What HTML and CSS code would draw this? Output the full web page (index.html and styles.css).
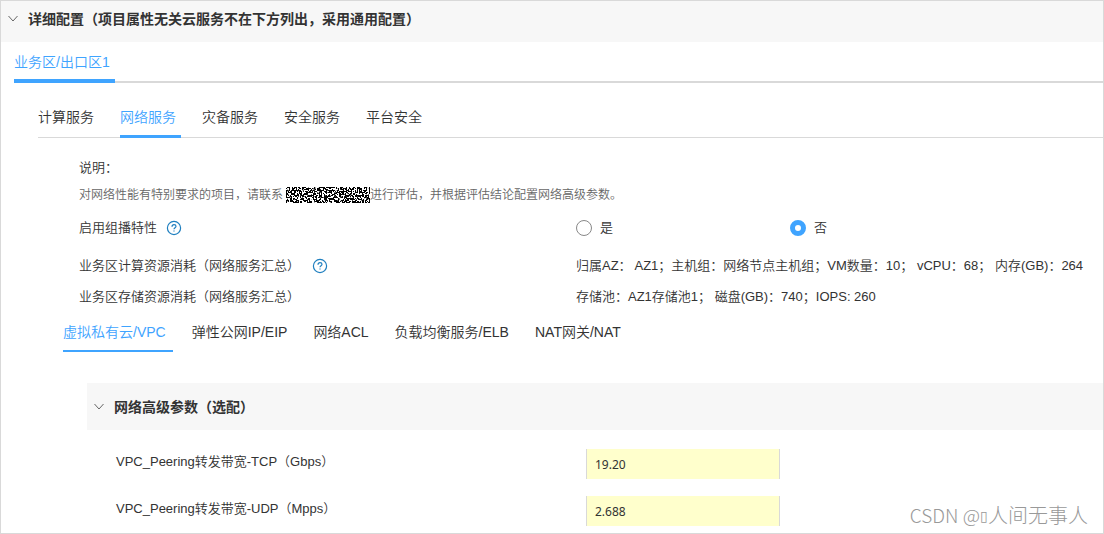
FILE: index.html
```html
<!DOCTYPE html>
<html lang="zh-CN">
<head>
<meta charset="utf-8">
<meta name="viewport" content="width=device-width, initial-scale=1">
<title>详细配置</title>
<link rel="stylesheet" href="styles.css">
</head>
<body>
<main class="page">
  <h1 class="section-head">
    <svg class="chevron" viewBox="0 0 10 10" aria-hidden="true"><path d="M0.5 2 L5 7 L9.5 2"/></svg>
    详细配置（项目属性无关云服务不在下方列出，采用通用配置）
  </h1>

  <nav class="tabs zone-tabs" aria-label="区域">
    <button class="tab active" type="button">业务区/出口区1</button>
  </nav>

  <nav class="tabs service-tabs" aria-label="服务">
    <button class="tab" type="button">计算服务</button>
    <button class="tab active" type="button">网络服务</button>
    <button class="tab" type="button">灾备服务</button>
    <button class="tab" type="button">安全服务</button>
    <button class="tab" type="button">平台安全</button>
  </nav>

  <section class="summary">
    <p class="note-title">说明：</p>
    <p class="note">对网络性能有特别要求的项目，请联系<svg class="redacted" aria-hidden="true"><filter id="grain" x="0" y="0" width="1" height="1" color-interpolation-filters="sRGB"><feTurbulence type="fractalNoise" baseFrequency="0.6" numOctaves="1" seed="4"/><feColorMatrix values="40 0 0 0 -20  40 0 0 0 -20  40 0 0 0 -20  0 0 0 0 1"/></filter><rect width="100%" height="100%" filter="url(#grain)"/></svg>进行评估，并根据评估结论配置网络高级参数。</p>

    <div class="row row-radio">
      <div class="label" id="multicast">启用组播特性
        <svg class="help" viewBox="0 0 16 16" aria-hidden="true"><circle cx="8" cy="8" r="6.6"/><path d="M6 6.7 C6 5.3 6.8 4.6 8 4.6 C9.2 4.6 10 5.3 10 6.3 C10 7.7 8 7.7 8 9.3 M8 10.4 V11.6"/></svg>
      </div>
      <div class="radios" role="radiogroup" aria-labelledby="multicast">
        <label class="radio"><input type="radio" name="multicast">是</label>
        <label class="radio"><input type="radio" name="multicast" checked>否</label>
      </div>
    </div>
    <div class="row">
      <div class="label label-wide">业务区计算资源消耗（网络服务汇总）
        <svg class="help" viewBox="0 0 16 16" aria-hidden="true"><circle cx="8" cy="8" r="6.6"/><path d="M6 6.7 C6 5.3 6.8 4.6 8 4.6 C9.2 4.6 10 5.3 10 6.3 C10 7.7 8 7.7 8 9.3 M8 10.4 V11.6"/></svg>
      </div>
      <div class="value">归属AZ： AZ1；主机组：网络节点主机组；VM数量：10； vCPU：68； 内存(GB)：264</div>
    </div>
    <div class="row">
      <div class="label">业务区存储资源消耗（网络服务汇总）</div>
      <div class="value">存储池：AZ1存储池1； 磁盘(GB)：740；IOPS: 260</div>
    </div>
  </section>

  <nav class="tabs network-tabs" aria-label="网络服务">
    <button class="tab active" type="button">虚拟私有云/VPC</button>
    <button class="tab" type="button">弹性公网IP/EIP</button>
    <button class="tab" type="button">网络ACL</button>
    <button class="tab" type="button">负载均衡服务/ELB</button>
    <button class="tab" type="button">NAT网关/NAT</button>
  </nav>

  <section class="params">
    <h2 class="params-head">
      <svg class="chevron" viewBox="0 0 10 10" aria-hidden="true"><path d="M0.5 2 L5 7 L9.5 2"/></svg>
      网络高级参数（选配）
    </h2>
    <div class="field">
      <label for="tcp">VPC_Peering转发带宽-TCP（Gbps）</label>
      <input id="tcp" type="text" value="19.20">
    </div>
    <div class="field">
      <label for="udp">VPC_Peering转发带宽-UDP（Mpps）</label>
      <input id="udp" type="text" value="2.688">
    </div>
  </section>

  <div class="watermark">CSDN @<span class="tofu">▯</span><span class="author">人间无事人</span></div>
</main>
</body>
</html>
```
FILE: styles.css
```css
* {
  box-sizing: border-box;
}

body {
  margin: 0;
  background: #fff;
  color: #333;
  font-family: "Liberation Sans", "Noto Sans CJK SC", sans-serif;
  font-size: 13px;
  font-weight: 350;
  line-height: 20px;
  text-spacing-trim: space-all;
}

h1, h2, p {
  margin: 0;
}

.page {
  position: relative;
  min-height: 100vh;
  border: 1px solid #d9d9d9;
}

.section-head,
.params-head {
  display: flex;
  align-items: center;
  background: #f7f7f7;
  font-size: 14px;
  font-weight: 700;
}

.section-head {
  gap: 10px;
  height: 41px;
  padding: 0 7px 6px;
}

.chevron {
  flex: none;
  width: 10px;
  height: 10px;
  fill: none;
  stroke: #666;
}

.tabs {
  display: flex;
  gap: 21px;
}

.tab {
  margin: 0;
  padding: 0 5px 0 0;
  border: 0;
  background: none;
  color: #333;
  font: inherit;
  font-size: 14px;
  line-height: 20px;
  text-align: left;
  white-space: nowrap;
}

.tab.active {
  color: #3fa4ff;
}

.zone-tabs {
  margin-left: 13px;
  padding-top: 10px;
  box-shadow: inset 0 -2px #d9d9d9;
}

.zone-tabs .tab {
  padding-bottom: 7px;
  border-bottom: 4px solid transparent;
}

.zone-tabs .active {
  border-color: #3fa4ff;
}

.service-tabs {
  margin-left: 37px;
  padding-top: 24px;
  box-shadow: inset 0 -1px #d9d9d9;
}

.service-tabs .tab {
  padding-bottom: 8px;
  border-bottom: 3px solid transparent;
}

.service-tabs .active {
  border-color: #3fa4ff;
}

.summary {
  padding: 20px 0 0 78px;
}

.note-title {
  margin-bottom: 7px;
}

.note {
  display: flex;
  align-items: center;
  color: #666;
  font-size: 12px;
  white-space: nowrap;
}

.redacted {
  width: 84px;
  height: 16px;
  margin-left: 3px;
}

.row {
  display: grid;
  grid-template-columns: 497fr 527fr;
  align-items: center;
  min-height: 31px;
}

.row-radio {
  min-height: 45px;
}

.label {
  display: flex;
  align-items: center;
  gap: 9px;
}

.label-wide {
  gap: 12px;
}

.help {
  width: 16px;
  height: 16px;
  fill: none;
  stroke: #1f7fbf;
  stroke-width: 1.2;
}

.value {
  white-space: nowrap;
}

.radios {
  display: flex;
}

.radio {
  display: flex;
  align-items: center;
  gap: 8px;
  width: 214px;
}

.radio input {
  appearance: none;
  width: 16px;
  height: 16px;
  margin: 0;
  border: 1px solid #888;
  border-radius: 50%;
  background: #fff;
}

.radio input:checked {
  border: 5px solid #3fa4ff;
}

.network-tabs {
  gap: 19px;
  margin-left: 62px;
  padding-top: 10px;
}

.network-tabs .tab {
  padding-right: 7px;
  padding-bottom: 8px;
  border-bottom: 2px solid transparent;
}

.network-tabs .active {
  border-color: #3fa4ff;
}

.params {
  margin: 31px 0 0 86px;
}

.params-head {
  gap: 10px;
  height: 47px;
  margin-bottom: 19px;
  padding: 0 7px;
}

.field {
  display: grid;
  grid-template-columns: 470px 194px;
  margin-bottom: 17px;
  padding-left: 29px;
}

.field:last-child {
  margin-bottom: 6px;
}

.field label {
  line-height: 26px;
}

.field input {
  width: 100%;
  height: 30px;
  padding: 0 8px;
  border: 0 solid #d9d9d9;
  border-width: 0 1px;
  border-radius: 0;
  background: #ffffcc;
  color: #333;
  font-family: "Noto Sans", sans-serif;
  font-size: 12px;
}

.watermark {
  position: absolute;
  right: 15px;
  bottom: 4px;
  color: #999;
  font-family: "Noto Sans CJK SC", sans-serif;
  font-size: 19px;
  font-weight: 300;
  line-height: 26px;
  white-space: nowrap;
}

.tofu {
  font-family: "DejaVu Sans", sans-serif;
  font-size: 14px;
  vertical-align: 2px;
}

.author {
  font-size: 20px;
}
```
